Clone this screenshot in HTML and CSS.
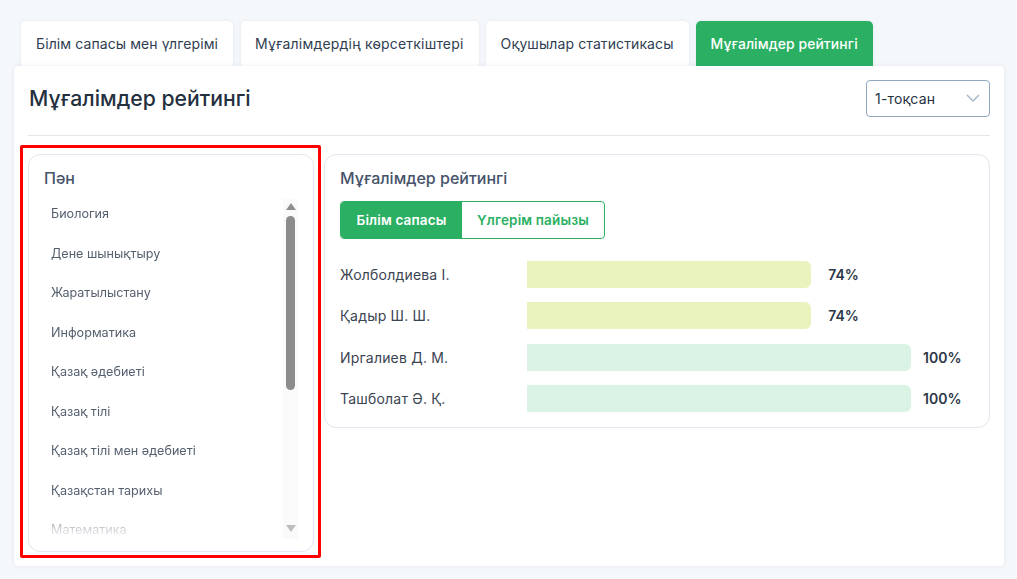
FILE: index.html
```html
<!DOCTYPE html>
<html>
<head>
    <title>Мұғалімдер рейтингі</title>
    <link rel="stylesheet" href="styles.css">
</head>
<body>
    <div class="tabs">
        <div class="tab">Білім сапасы мен үлгерімі</div>
        <div class="tab wide">Мұғалімдердің көрсеткіштері</div>
        <div class="tab">Оқушылар статистикасы</div>
        <div class="tab active">Мұғалімдер рейтингі</div>
    </div>
    <div class="card">
        <div class="card-header">
            <h1>Мұғалімдер рейтингі</h1>
            <div class="select">
                <span>1-тоқсан</span>
                <svg width="14" height="8" viewBox="0 0 14 8" fill="none" stroke="#a9b8c8" stroke-width="1.5"><path d="M1 1l6 6 6-6"/></svg>
            </div>
        </div>
        <div class="content">
            <div class="panel subjects">
                <h3>Пән</h3>
                <div class="list-wrap">
                    <div class="subject-list">
                        <div class="subject">Биология</div>
                        <div class="subject">Дене шынықтыру</div>
                        <div class="subject">Жаратылыстану</div>
                        <div class="subject">Информатика</div>
                        <div class="subject">Қазақ әдебиеті</div>
                        <div class="subject">Қазақ тілі</div>
                        <div class="subject">Қазақ тілі мен әдебиеті</div>
                        <div class="subject">Қазақстан тарихы</div>
                        <div class="subject">Математика</div>
                    </div>
                    <div class="scrollbar">
                        <div class="arrow-up"></div>
                        <div class="thumb"></div>
                        <div class="arrow-down"></div>
                    </div>
                </div>
                <div class="highlight"></div>
            </div>
            <div class="panel rating">
                <h3>Мұғалімдер рейтингі</h3>
                <div class="switch">
                    <div class="switch-btn on">Білім сапасы</div>
                    <div class="switch-btn">Үлгерім пайызы</div>
                </div>
                <div class="rows">
                    <div class="row">
                        <div class="name">Жолболдиева І.</div>
                        <div class="bar-box"><div class="bar mid" style="width: 74%"></div><b>74%</b></div>
                    </div>
                    <div class="row">
                        <div class="name">Қадыр Ш. Ш.</div>
                        <div class="bar-box"><div class="bar mid" style="width: 74%"></div><b>74%</b></div>
                    </div>
                    <div class="row">
                        <div class="name">Иргалиев Д. М.</div>
                        <div class="bar-box"><div class="bar high" style="width: 100%"></div><b>100%</b></div>
                    </div>
                    <div class="row">
                        <div class="name">Ташболат Ә. Қ.</div>
                        <div class="bar-box"><div class="bar high" style="width: 100%"></div><b>100%</b></div>
                    </div>
                </div>
            </div>
        </div>
    </div>
</body>
</html>
```

FILE: styles.css
```css
body {
    font-family: Inter, "Noto Sans", sans-serif;
    margin: 0;
    background: #f5f8fb;
    color: #2d3748;
    height: 579px;
    overflow: hidden;
}
.tabs {
    display: flex;
    gap: 7px;
    padding: 21px 0 0 21px;
    height: 45px;
}
.tab {
    display: flex;
    align-items: center;
    padding: 0 15px;
    background: white;
    border-radius: 5px 5px 0 0;
    font-size: 14px;
    letter-spacing: 0.1px;
    color: #2f3e52;
    box-shadow: 0 0 4px rgba(100,120,140,0.12);
}
.tab.wide {
    padding: 0 15px 0 14px;
    letter-spacing: 0.2px;
    margin-left: 1px;
}
.tab.active {
    background: #2bb063;
    color: white;
    font-weight: 500;
    font-size: 13.9px;
}
.card {
    position: relative;
    margin-left: 14px;
    width: 962px;
    height: 500px;
    padding: 0 14px;
    background: white;
    border-radius: 4px;
    box-shadow: 0 0 4px rgba(100,120,140,0.15);
}
.card-header {
    display: flex;
    align-items: center;
    justify-content: space-between;
    height: 69px;
    border-bottom: 1px solid #e2e6ea;
}
h1 {
    margin: 0 0 6px 1px;
    font-size: 21.2px;
    font-weight: 500;
    color: #25303f;
}
.select {
    display: flex;
    align-items: center;
    justify-content: space-between;
    box-sizing: border-box;
    width: 124px;
    height: 37px;
    padding: 0 9px 0 8px;
    border: 1px solid #8fa7bd;
    border-radius: 4px;
    font-size: 14px;
    letter-spacing: 0.2px;
    color: #25303f;
    margin-bottom: 5px;
}
.content {
    display: flex;
    align-items: flex-start;
    gap: 10px;
    padding: 18px 0 0 0;
}
.panel {
    box-sizing: border-box;
    border: 1px solid #e2e6ee;
    border-radius: 12px;
    padding: 13px 15px 0;
}
h3 {
    margin: 0;
    font-size: 16px;
    line-height: 20px;
    font-weight: 500;
    color: #46536a;
}
.subjects {
    position: relative;
    width: 286px;
    height: 398px;
}
.list-wrap {
    display: flex;
    height: 340px;
    margin-top: 11px;
}
.subject-list {
    flex: 1;
    overflow: hidden;
    padding-left: 7px;
    -webkit-mask-image: linear-gradient(to bottom, black 90%, transparent 100%);
    mask-image: linear-gradient(to bottom, black 90%, transparent 100%);
}
.subject {
    height: 39.5px;
    line-height: 30px;
    font-size: 12.6px;
    color: #55606f;
}
.scrollbar {
    display: flex;
    flex-direction: column;
    align-items: center;
    width: 15px;
    background: #fafafa;
    padding-top: 4px;
}
.arrow-up {
    border-left: 5px solid transparent;
    border-right: 5px solid transparent;
    border-bottom: 7px solid #8f8f8f;
}
.arrow-down {
    margin-top: auto;
    margin-bottom: 7px;
    border-left: 5px solid transparent;
    border-right: 5px solid transparent;
    border-top: 7px solid #bdbdbd;
}
.thumb {
    width: 9px;
    height: 174px;
    margin-top: 6px;
    background: #8c8c8c;
    border-radius: 5px;
}
.highlight {
    position: absolute;
    left: -9px;
    top: -10px;
    width: 295px;
    height: 407px;
    border: 3px solid #ff0000;
    border-radius: 2px;
}
.rating {
    width: 666px;
    height: 274px;
}
.switch {
    display: flex;
    width: 265px;
    height: 38px;
    margin-top: 13px;
    box-sizing: border-box;
    border: 1px solid #2bb063;
    border-radius: 4px;
    font-size: 13.5px;
    letter-spacing: 0.15px;
    font-weight: 600;
    color: #2bb063;
    overflow: hidden;
}
.switch-btn {
    display: flex;
    align-items: center;
    justify-content: center;
    flex: 1;
}
.switch-btn.on {
    flex: 0 0 121px;
    background: #2bb063;
    color: white;
}
.rows {
    margin-top: 22px;
}
.row {
    display: flex;
    align-items: center;
    height: 27px;
    margin-bottom: 14.33px;
}
.name {
    width: 187px;
    font-size: 14px;
    letter-spacing: 0.2px;
    color: #3b4452;
}
.bar-box {
    display: flex;
    align-items: center;
    width: 384px;
}
.bar {
    height: 27px;
    border-radius: 0 6px 6px 0;
    flex-shrink: 0;
}
.bar.mid {
    background: #eaf2bd;
}
.bar.high {
    background: #daf3e4;
}
.bar-box b {
    margin-left: 17px;
    font-size: 14px;
    font-weight: 600;
    color: #2d3748;
    white-space: nowrap;
}
.bar.high + b {
    margin-left: 12px;
}
```
